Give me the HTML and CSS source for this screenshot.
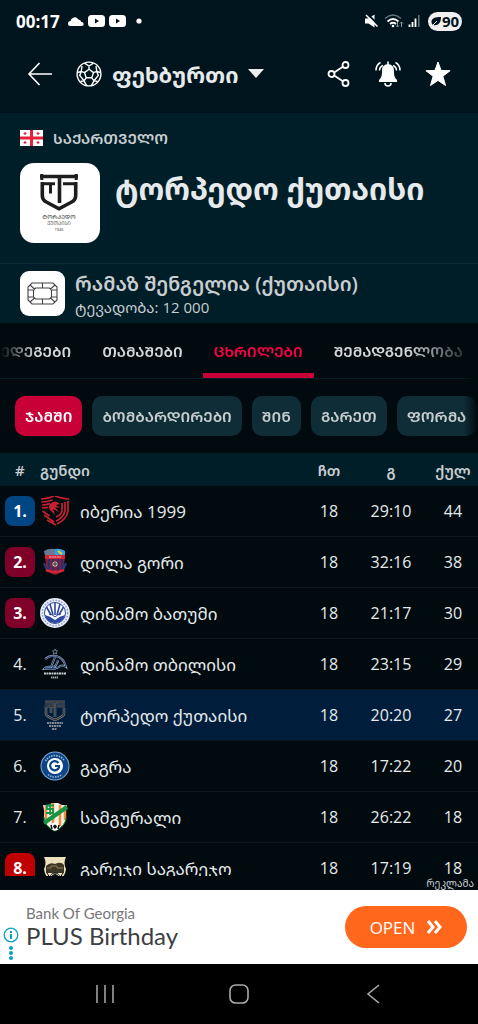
FILE: index.html
```html
<!DOCTYPE html>
<html lang="ka">
<head>
  <meta charset="UTF-8">
  <meta name="viewport" content="width=device-width, initial-scale=1.0">
  <title>ტორპედო ქუთაისი</title>
  <link rel="stylesheet" href="styles.css">
</head>
<body>
  <div class="status">
    <span class="time">00:17</span>
    <svg width="75" height="16" viewBox="0 0 75 16" fill="#fff">
      <path d="M2.500 13a2.500 2.500 0 0 1 0-5 4.200 4.200 0 0 1 7.800-1.500 3 3 0 0 1 3 2.500 2 2 0 0 1 .700 4z"/>
      <rect x="20" y="2" width="17" height="12" rx="3.500"/>
      <rect x="41" y="2" width="17" height="12" rx="3.500"/>
      <path d="M27 5.500v5l4-2.500zM48 5.500v5l4-2.500z" fill="#00141e"/>
      <circle cx="71" cy="8" r="2.600"/>
    </svg>
    <svg class="signals" width="56" height="18" viewBox="0 0 56 18" fill="none" stroke="#fff">
      <path d="M1 6.500h3.500l6-4v13l-6-4H1z" fill="#fff" stroke="none"/>
      <path d="M4 2.500l11 11" stroke="#00141e" stroke-width="2"/>
      <path d="M2 3l11.500 11.500" stroke-width="1.500"/>
      <path d="M21 6.500q8-7 16 0" stroke="#66747c" stroke-width="1.600"/>
      <path d="M23.500 9.500q5.500-5 11 0M26 12q3-2.500 6 0" stroke-width="1.800"/>
      <circle cx="29" cy="14" r="1.300" fill="#fff" stroke="none"/>
      <path d="M33.500 10v5M32 13.500l1.500 1.500 1.500-1.500M37.500 15v-5M36 11.500l1.500-1.500 1.500 1.500" stroke="#8b979d"/>
      <path d="M45.500 15v-2.500M48.500 15v-5M51.500 15V6.500" stroke-width="1.800"/>
      <path d="M54.800 15V3" stroke="#66747c" stroke-width="1.500"/>
    </svg>
    <span class="battery">
      <svg width="11" height="12" viewBox="0 0 11 12"><path d="M1 9C-1 4 3 2 10 2c0 6-3 9-8 8z" fill="#00141e"/><path d="M1 11l5-5" stroke="#f0f0f0"/></svg>90
    </span>
  </div>

  <header class="topbar">
    <button class="icon-btn" aria-label="უკან">
      <svg width="25" height="24" viewBox="0 0 25 24" fill="none" stroke="#fff" stroke-width="1.600"><path d="M25 12H2M12.500 1L2 12l10.500 11"/></svg>
    </button>
    <button class="sport">
      <svg width="26" height="26" viewBox="0 0 26 26" fill="none" stroke="#fff" stroke-width="1.400">
        <circle cx="13" cy="13" r="11.900"/>
        <path d="M13 8.300l4.500 3.300-1.700 5.200h-5.600l-1.700-5.200zM13 8.300V5M17.500 11.600l3.300-1.200M15.800 16.800l2.200 3M10.200 16.800l-2.200 3M8.500 11.600l-3.300-1.200M8.500 2.200L13 5l4.500-2.800M24.500 11.500l-3.700-1.100-.8-5.200M21.500 20.500L18 19.800l-2.500 4.500M10.500 24.300L8 19.800l-3.500.7M6 5.200l-.8 5.200-3.700 1.100M5.200 10.400l-1.500 4 4.300 5.400M20.800 10.400l1.500 4-4.300 5.400"/>
      </svg>
      <span>ფეხბურთი</span>
      <svg width="16" height="9" viewBox="0 0 16 9"><path d="M0 0h16L8 9z" fill="#eee"/></svg>
    </button>
    <button class="icon-btn" aria-label="გაზიარება">
      <svg width="24" height="26" viewBox="0 0 24 26" fill="none" stroke="#fff" stroke-width="1.800"><circle cx="18.500" cy="4" r="3"/><circle cx="4.500" cy="13" r="3"/><circle cx="18.500" cy="22" r="3"/><path d="M7.200 11.400l8.600-5.700M7.200 14.600l8.600 5.700"/></svg>
    </button>
    <button class="icon-btn" aria-label="შეტყობინებები">
      <svg width="26" height="26" viewBox="0 0 26 26"><path d="M12.200 .500h1.600V3.200c3.700.6 5.200 3.100 5.200 6.300 0 5 .5 7 3 9.500V21H4v-2c2.500-2.500 3-4.500 3-9.500 0-3.200 1.500-5.700 5.200-6.300z" fill="#fff"/><path d="M10 22a3 3 0 0 0 6 0" fill="none" stroke="#fff" stroke-width="1.600"/><path d="M5.500 1.500Q1 4 1 9.500M8 4.500Q4.500 6 4.500 9.500M20.500 1.500Q25 4 25 9.500M18 4.500q3.500 1.500 3.500 5" fill="none" stroke="#fff" stroke-width="1.500"/></svg>
    </button>
    <button class="icon-btn" aria-label="რჩეული">
      <svg width="26" height="26" viewBox="0 0 26 26"><path d="M13 1l3.100 8.500 9 .200-7.200 5.500 2.600 9.300L13 19.400 5.500 24.500l2.600-9.300L.900 9.700l9-.200z" fill="#fff" stroke="#fff" stroke-linejoin="round"/></svg>
    </button>
  </header>

  <section class="hero">
    <div class="country">
      <svg width="23" height="16" viewBox="0 0 23 16"><path fill="#fff" d="M0 0h23v16H0z"/><path d="M11.500 0v16M0 8h23" stroke="#e8203a" stroke-width="3"/><path d="M5 2v3M3.500 3.500h3M18 2v3M16.500 3.500h3M5 11v3M3.500 12.500h3M18 11v3M16.500 12.500h3" stroke="#e8203a" stroke-width="1.200"/></svg>
      <span>ᲡᲐᲥᲐᲠᲗᲕᲔᲚᲝ</span>
    </div>
    <div class="team">
      <div class="team-logo">
        <svg width="80" height="80" viewBox="0 0 80 80">
          <g fill="none" stroke="#1d1d1d" stroke-width="3.600">
            <path d="M20 13.500h38" stroke-width="3.400"/>
            <path d="M21.800 11v6M56.200 11v6" stroke-width="3"/>
            <path d="M22.300 19v13.500q0 4.500 4 6.500L39 45.800 51.700 39q4-2 4-6.500V19"/>
            <path d="M21 20.800h14M30.500 20v10.500M43 20.800h14" stroke-width="3"/>
            <path d="M39.500 13v27"/>
          </g>
          <text x="39" y="56" font-size="6" text-anchor="middle" fill="#333">ᲢᲝᲠᲞᲔᲓᲝ</text>
          <text x="39" y="62" font-size="5" text-anchor="middle" fill="#555">ᲥᲣᲗᲐᲘᲡᲘ</text>
          <text x="39" y="68" font-size="4" text-anchor="middle" fill="#333">1946</text>
        </svg>
      </div>
      <h1>ტორპედო ქუთაისი</h1>
    </div>
    <div class="stadium">
      <div class="stadium-logo">
        <svg width="31" height="23" viewBox="0 0 31 23" fill="none" stroke="#444" stroke-width="1.100"><path d="M5 1h21l4 4v13l-4 4H5l-4-4V5z"/><path d="M8.500 6h14l2 2v7l-2 2h-14l-2-2V8zM3 3l4.500 4M28 3l-4.500 4M3 20l4.500-4M28 20l-4.500-4M15.500 1v5M15.500 17v5M1 8h5M25 8h5M1 15h5M25 15h5"/></svg>
      </div>
      <div>
        <div class="stadium-name">რამაზ შენგელია (ქუთაისი)</div>
        <div class="capacity">ტევადობა: 12 000</div>
      </div>
    </div>
  </section>

  <nav class="tabs">
    <a href="#results">ᲨᲔᲓᲔᲒᲔᲑᲘ</a>
    <a href="#fixtures">ᲗᲐᲛᲐᲨᲔᲑᲘ</a>
    <a href="#standings" class="active">ᲪᲮᲠᲘᲚᲔᲑᲘ</a>
    <a href="#squad">ᲨᲔᲛᲐᲓᲒᲔᲜᲚᲝᲑᲐ</a>
  </nav>

  <div class="chips">
    <button class="active">ᲯᲐᲛᲨᲘ</button>
    <button>ᲑᲝᲛᲑᲐᲠᲓᲘᲠᲔᲑᲘ</button>
    <button>ᲨᲘᲜ</button>
    <button>ᲒᲐᲠᲔᲗ</button>
    <button>ᲤᲝᲠᲛᲐ</button>
  </div>

  <main class="standings">
    <table>
      <colgroup>
        <col class="col-rank"><col class="col-logo"><col><col class="col-num"><col class="col-num"><col class="col-last">
      </colgroup>
      <thead>
        <tr><th class="rank">#</th><th colspan="2">გუნდი</th><th class="num">ჩთ</th><th class="num">გ</th><th class="num last">ქულ</th></tr>
      </thead>
      <tbody>
        <tr>
          <td class="rank"><span class="badge blue">1.</span></td>
          <td><svg width="30" height="30" viewBox="0 0 30 30" fill="none" stroke="#c8202f" stroke-width="1.700"><path d="M1 3q7 0 13-3M15 0q8 3 14 3M1.500 6q6 0 11-2M2 9q4 0 8-1.500M2 12l6-.5M2.500 15l7 5M4 19l10 7M7 24l9 5M28 5v10q-1 8-11 13M25 6v9q-2 7-9 10M22 7v8q-1 4-6 6"/><path d="M10 8q5-5 10 0l-4 1 4 3-5-1 4 5-6-3 2 6-5-5q-2-3 0-6z" fill="#c8202f" stroke="none"/></svg></td>
          <td>იბერია 1999</td><td class="num">18</td><td class="num">29:10</td><td class="num last">44</td>
        </tr>
        <tr>
          <td class="rank"><span class="badge wine">2.</span></td>
          <td><svg width="30" height="30" viewBox="0 0 30 30"><path d="M5 4q10-4 20 0l-1 18q-3 4-9 6-6-2-9-6z" fill="#8b1a35"/><path d="M4 4q5-3 11-2v7H5z" fill="#6b7897"/><path d="M15 2q5-1 10 2v5H15z" fill="#35a3d8"/><path d="M18 4l4 3" stroke="#ead33f" stroke-width="2"/><path d="M5 8h20v4H5z" fill="#d42336"/><path d="M9 10h12" stroke="#eec0c5" stroke-dasharray="2 .6"/><path d="M9 12v11M13 12v12M18 12v12M22 12v11" stroke="#1c3575" stroke-width="2"/><circle cx="15" cy="17" r="2.600" fill="#e0b7a0"/><path d="M15 15v4M13 17h4" stroke="#333"/><path d="M4 16l3 7M26 16l-3 7" stroke="#223a80" stroke-width="2"/><path d="M6 23q9 4 18 0" stroke="#d42336" stroke-width="2.500" fill="none"/></svg></td>
          <td>დილა გორი</td><td class="num">18</td><td class="num">32:16</td><td class="num last">38</td>
        </tr>
        <tr>
          <td class="rank"><span class="badge wine">3.</span></td>
          <td><svg width="30" height="30" viewBox="0 0 30 30"><circle cx="15" cy="15" r="15" fill="#e9edf7"/><circle cx="15" cy="15" r="12.700" fill="none" stroke="#8e9ccf" stroke-width="1.500" stroke-dasharray="1.500 1.500"/><circle cx="15" cy="15" r="10.500" fill="#fff" stroke="#2d489f"/><path d="M5 17q5 1 10 5 5-4 10-5-2 8-10 8T5 17z" fill="#2d489f"/><path d="M15 17V5M13 17L10 6M17 17l3-11M11 17L6.500 9M19 17l4.500-8" stroke="#2d489f" stroke-width="1.600"/><path d="M9 16q3 0 6 3 3-3 6-3" stroke="#2d489f" fill="none"/></svg></td>
          <td>დინამო ბათუმი</td><td class="num">18</td><td class="num">21:17</td><td class="num last">30</td>
        </tr>
        <tr>
          <td class="rank"><span class="badge">4.</span></td>
          <td><svg width="30" height="30" viewBox="0 0 30 30" fill="none"><path d="M15 0l.8 1.700 1.700.2-1.200 1.300.3 1.800-1.600-.9-1.600.9.3-1.800-1.200-1.300 1.700-.2z" stroke="#8b96a8" stroke-width=".8"/><path d="M5 10q5-4 11-3 8 2 10 11-4-3-7 0-3 2-7 1 5-2 6-8M15 8l-4 10q-5-1-7 2 7-1 12 0" stroke="#a1aabd" stroke-width="2"/><path d="M5 10q5-4 11-3 8 2 10 11-4-3-7 0-3 2-7 1 5-2 6-8M15 8l-4 10q-5-1-7 2 7-1 12 0" stroke="#17386c"/><path d="M4 24.500h22" stroke="#c8ccd4" stroke-width="2.200" stroke-dasharray="2 .5"/><path d="M11 28.500h7" stroke="#9da5b3" stroke-width="2" stroke-dasharray="1.500 .5"/></svg></td>
          <td>დინამო თბილისი</td><td class="num">18</td><td class="num">23:15</td><td class="num last">29</td>
        </tr>
        <tr class="current">
          <td class="rank"><span class="badge">5.</span></td>
          <td><svg width="30" height="30" viewBox="0 0 30 30" fill="none"><path d="M5 2h20M6 5v9q0 2 9 6 9-4 9-6V8M5 6h9M11 6v7M15 2v15M17 6h8" stroke="#9a9ba0" stroke-width="2.400"/><path d="M5 2h20M6 5v9q0 2 9 6 9-4 9-6V8M5 6h9M11 6v7M15 2v15M17 6h8" stroke="#24262b" stroke-width="1.300"/><path d="M7 23h16M9 26h12M12 29h5" stroke="#a7a9ae" stroke-width="1.500" stroke-dasharray="2 .5"/></svg></td>
          <td>ტორპედო ქუთაისი</td><td class="num">18</td><td class="num">20:20</td><td class="num last">27</td>
        </tr>
        <tr>
          <td class="rank"><span class="badge">6.</span></td>
          <td><svg width="30" height="30" viewBox="0 0 30 30" fill="none"><circle cx="15" cy="15" r="14.500" fill="#7da9d3"/><circle cx="15" cy="15" r="13.500" fill="#0c4485"/><path d="M5.500 10a11 11 0 0 1 19 0M8 23.500a11 11 0 0 0 14 0" stroke="#9bb6d6" stroke-width="1.600" stroke-dasharray="1.500 1"/><circle cx="15" cy="15" r="8" fill="#fff"/><path d="M18.500 12a4.600 4.600 0 1 0 .5 4.500v-1.500h-4" stroke="#0c4485" stroke-width="2.200"/></svg></td>
          <td>გაგრა</td><td class="num">18</td><td class="num">17:22</td><td class="num last">20</td>
        </tr>
        <tr>
          <td class="rank"><span class="badge">7.</span></td>
          <td><svg width="30" height="30" viewBox="0 0 30 30" fill="none"><path d="M3 3q5 1 9-2h6q4 3 9 2-2 6-1 12 0 9-11 14Q4 24 4 15 5 9 3 3z" fill="#f4f1e8"/><path d="M6 4v18M13 1v24M20 3v21M25 4v14" stroke="#ef8d38" stroke-width="2.500"/><path d="M4 21L27 5" stroke="#159447" stroke-width="4"/><path d="M14 3.500H7v3.500h6v4H6M10 2v11" stroke="#159447" stroke-width="1.800"/><path d="M4 15q0 9 11 14 11-5 11-14" stroke="#159447"/><circle cx="15" cy="24.500" r="4" fill="#fff"/><path d="M15 22.500l2 1.500-1 2.500h-2L13 24z" fill="#111"/><path d="M11 23l1 4M19 23l-1 4" stroke="#111" stroke-width="1.500"/></svg></td>
          <td>სამგურალი</td><td class="num">18</td><td class="num">26:22</td><td class="num last">18</td>
        </tr>
        <tr>
          <td class="rank"><span class="badge red">8.</span></td>
          <td><svg width="30" height="30" viewBox="0 0 30 30"><path d="M4 4h22q-3 6 0 12-1 10-11 13Q5 26 4 16q3-6 0-12z" fill="#ece0bd"/><path d="M6 13q4-4 9-2 6-3 9 1v8H6z" fill="#3d3526"/><path d="M7 15h4v-2h6v2h6" stroke="#8f7c55" fill="none"/><circle cx="15" cy="25" r="5" fill="#fff" stroke="#111"/><path d="M15 21l3 2-1 3h-4l-1-3zM7 20l3 5M23 20l-3 5" fill="#111" stroke="#111"/></svg></td>
          <td>გარეჯი საგარეჯო</td><td class="num">18</td><td class="num">17:19</td><td class="num last">18</td>
        </tr>
      </tbody>
    </table>
  </main>

  <div class="ad-label">რეკლამა</div>
  <aside class="ad">
    <div class="ad-info">
      <svg width="16" height="34" viewBox="0 0 16 34" fill="#08a3c4"><circle cx="8" cy="8" r="6.800" fill="none" stroke="#08a3c4" stroke-width="1.300"/><path d="M7 7h2v5H7zM7 4h2v2H7z"/><circle cx="8" cy="21" r="2"/><circle cx="8" cy="26" r="2"/><circle cx="8" cy="31" r="2"/></svg>
    </div>
    <div class="ad-text">
      <div class="ad-brand">Bank Of Georgia</div>
      <div class="ad-title">PLUS Birthday</div>
    </div>
    <button class="ad-open">OPEN
      <svg width="15" height="14" viewBox="0 0 15 14" fill="none" stroke="#fff" stroke-width="3"><path d="M1 1l5 6-5 6M8 1l5 6-5 6"/></svg>
    </button>
  </aside>

  <footer class="system">
    <button aria-label="აპები"><svg width="20" height="20" viewBox="0 0 20 20" stroke="#aaa" stroke-width="1.500"><path d="M2 1v18M10 1v18M18 1v18"/></svg></button>
    <button aria-label="მთავარი"><svg width="20" height="20" viewBox="0 0 20 20" fill="none" stroke="#aaa" stroke-width="1.600"><rect x="1" y="1" width="18" height="18" rx="5.500"/></svg></button>
    <button aria-label="უკან"><svg width="20" height="20" viewBox="0 0 20 20" fill="none" stroke="#aaa" stroke-width="1.600"><path d="M16 1L5 10l11 9"/></svg></button>
  </footer>
</body>
</html>
```
FILE: styles.css
```css
* {
  box-sizing: border-box;
}
body {
  margin: 0;
  height: 100vh;
  display: flex;
  flex-direction: column;
  overflow: hidden;
  background: #010a0f;
  color: #e6eaec;
  font-family: "Open Sans", "Noto Sans Georgian", "DejaVu Sans", sans-serif;
  font-size: 16px;
}
button {
  border: none;
  padding: 0;
  background: none;
  color: inherit;
  font: inherit;
  cursor: pointer;
}
svg {
  display: block;
  flex: none;
}

/* status bar */
.status {
  flex: none;
  height: 42px;
  padding: 0 16px;
  display: flex;
  align-items: center;
  gap: 8px;
  background: #00141e;
  color: #fff;
}
.time {
  font-size: 17px;
  font-weight: 700;
}
.signals {
  margin-left: auto;
}
.battery {
  width: 34px;
  height: 19px;
  border-radius: 10px;
  display: flex;
  align-items: center;
  justify-content: center;
  background: #f0f0f0;
  color: #00141e;
  font-size: 15px;
  font-weight: 700;
}

/* top bar */
.topbar {
  flex: none;
  height: 71px;
  padding: 0 27px 8px;
  display: flex;
  align-items: center;
  gap: 24px;
  background: #00141e;
}
.sport {
  margin-right: auto;
  display: flex;
  align-items: center;
  gap: 10px;
  font-size: 22px;
  font-weight: 700;
}

/* team header */
.hero {
  flex: none;
  background: #001e28;
}
.country {
  height: 50px;
  padding: 0 20px;
  display: flex;
  align-items: center;
  gap: 10px;
  color: #c8cdd0;
  font-size: 15px;
  font-weight: 600;
}
.team {
  height: 100px;
  padding: 0 20px;
  display: flex;
  gap: 15px;
}
.team-logo {
  width: 80px;
  height: 80px;
  border-radius: 14px;
  background: #fff;
}
h1 {
  margin: 7px 0 0;
  font-size: 30px;
  line-height: 38px;
  white-space: nowrap;
}
.stadium {
  height: 60px;
  padding: 0 20px;
  display: flex;
  align-items: center;
  gap: 10px;
  border-top: 1px solid #0f2d37;
  color: #c8cdd0;
}
.stadium-logo {
  width: 45px;
  height: 45px;
  border-radius: 9px;
  display: flex;
  align-items: center;
  justify-content: center;
  background: #fff;
}
.stadium-name {
  font-size: 20px;
  font-weight: 600;
  line-height: 26px;
  white-space: nowrap;
}
.capacity {
  font-size: 15px;
  line-height: 20px;
}

/* tabs */
.tabs {
  flex: none;
  height: 55px;
  padding-right: 4px;
  display: flex;
  justify-content: flex-end;
  gap: 9px;
  overflow: hidden;
  mask-image: linear-gradient(to right, transparent, #000 36px, #000 calc(100% - 70px), transparent);
}
.tabs a {
  flex: none;
  padding: 0 11px;
  color: #d4d8da;
  font-size: 15px;
  font-weight: 600;
  line-height: 56px;
  text-decoration: none;
  white-space: nowrap;
}
.tabs a.active {
  color: #ff0046;
  background: linear-gradient(#c80037, #c80037) bottom / 100% 5px no-repeat;
}

/* filters */
.chips {
  flex: none;
  height: 75px;
  padding: 17px 0 17px 15px;
  display: flex;
  gap: 10px;
  overflow: hidden;
  border-top: 1px solid #001e28;
  mask-image: linear-gradient(to left, transparent, #000 14px);
}
.chips button {
  flex: none;
  padding: 0 10px;
  border-radius: 10px;
  background: #0f2d37;
  color: #c8cdd0;
  font-size: 15px;
  font-weight: 600;
  white-space: nowrap;
}
.chips button.active {
  background: #c80037;
  color: #fff;
}

/* table */
.standings {
  flex: 1;
  min-height: 0;
  overflow: hidden;
}
table {
  width: 100%;
  border-spacing: 0;
  table-layout: fixed;
}
.col-rank, .col-logo {
  width: 40px;
}
.col-num {
  width: 62px;
}
.col-last {
  width: 56px;
}
th, td {
  padding: 0;
  text-align: left;
  white-space: nowrap;
}
th {
  height: 33px;
  background: #001e28;
  color: #c8cdd0;
  font-size: 15px;
  font-weight: 600;
}
td {
  height: 51px;
  border-bottom: 1px solid #0a181e;
  font-size: 17px;
}
th.rank {
  padding-left: 15px;
}
td.rank {
  padding-left: 5px;
}
.num {
  text-align: center;
}
td.num {
  font-size: 16px;
}
.last {
  padding-left: 6px;
}
.badge {
  width: 30px;
  height: 30px;
  border-radius: 8px;
  display: block;
  text-align: center;
  font-size: 16px;
  line-height: 30px;
}
.blue, .wine, .red {
  color: #fff;
  font-weight: 700;
}
.blue {
  background: #004682;
}
.wine {
  background: #7f0029;
}
.red {
  background: #c00000;
}
.current td {
  background: #001e3c;
}

/* ad */
.ad-label {
  flex: none;
  height: 14px;
  padding-right: 4px;
  text-align: right;
  color: #c8cdd0;
  font-size: 10px;
  line-height: 14px;
}
.ad {
  flex: none;
  height: 74px;
  padding-right: 11px;
  display: flex;
  align-items: center;
  background: #fff;
  font-family: Lato, "Open Sans", sans-serif;
}
.ad-info {
  width: 26px;
  padding: 34px 0 0 3px;
}
.ad-text {
  flex: 1;
}
.ad-brand {
  color: #777;
  font-size: 15px;
  line-height: 18px;
}
.ad-title {
  color: #3c4043;
  font-size: 24px;
  line-height: 28px;
}
.ad-open {
  width: 122px;
  height: 42px;
  border-radius: 21px;
  display: flex;
  align-items: center;
  justify-content: center;
  gap: 12px;
  background: #ff671d;
  color: #fff;
  font-family: "Open Sans", sans-serif;
  font-size: 17px;
}

/* system buttons */
.system {
  flex: none;
  height: 60px;
  padding: 0 38px;
  display: flex;
  align-items: center;
  background: #000;
}
.system button {
  flex: 1;
  display: flex;
  justify-content: center;
}
```
